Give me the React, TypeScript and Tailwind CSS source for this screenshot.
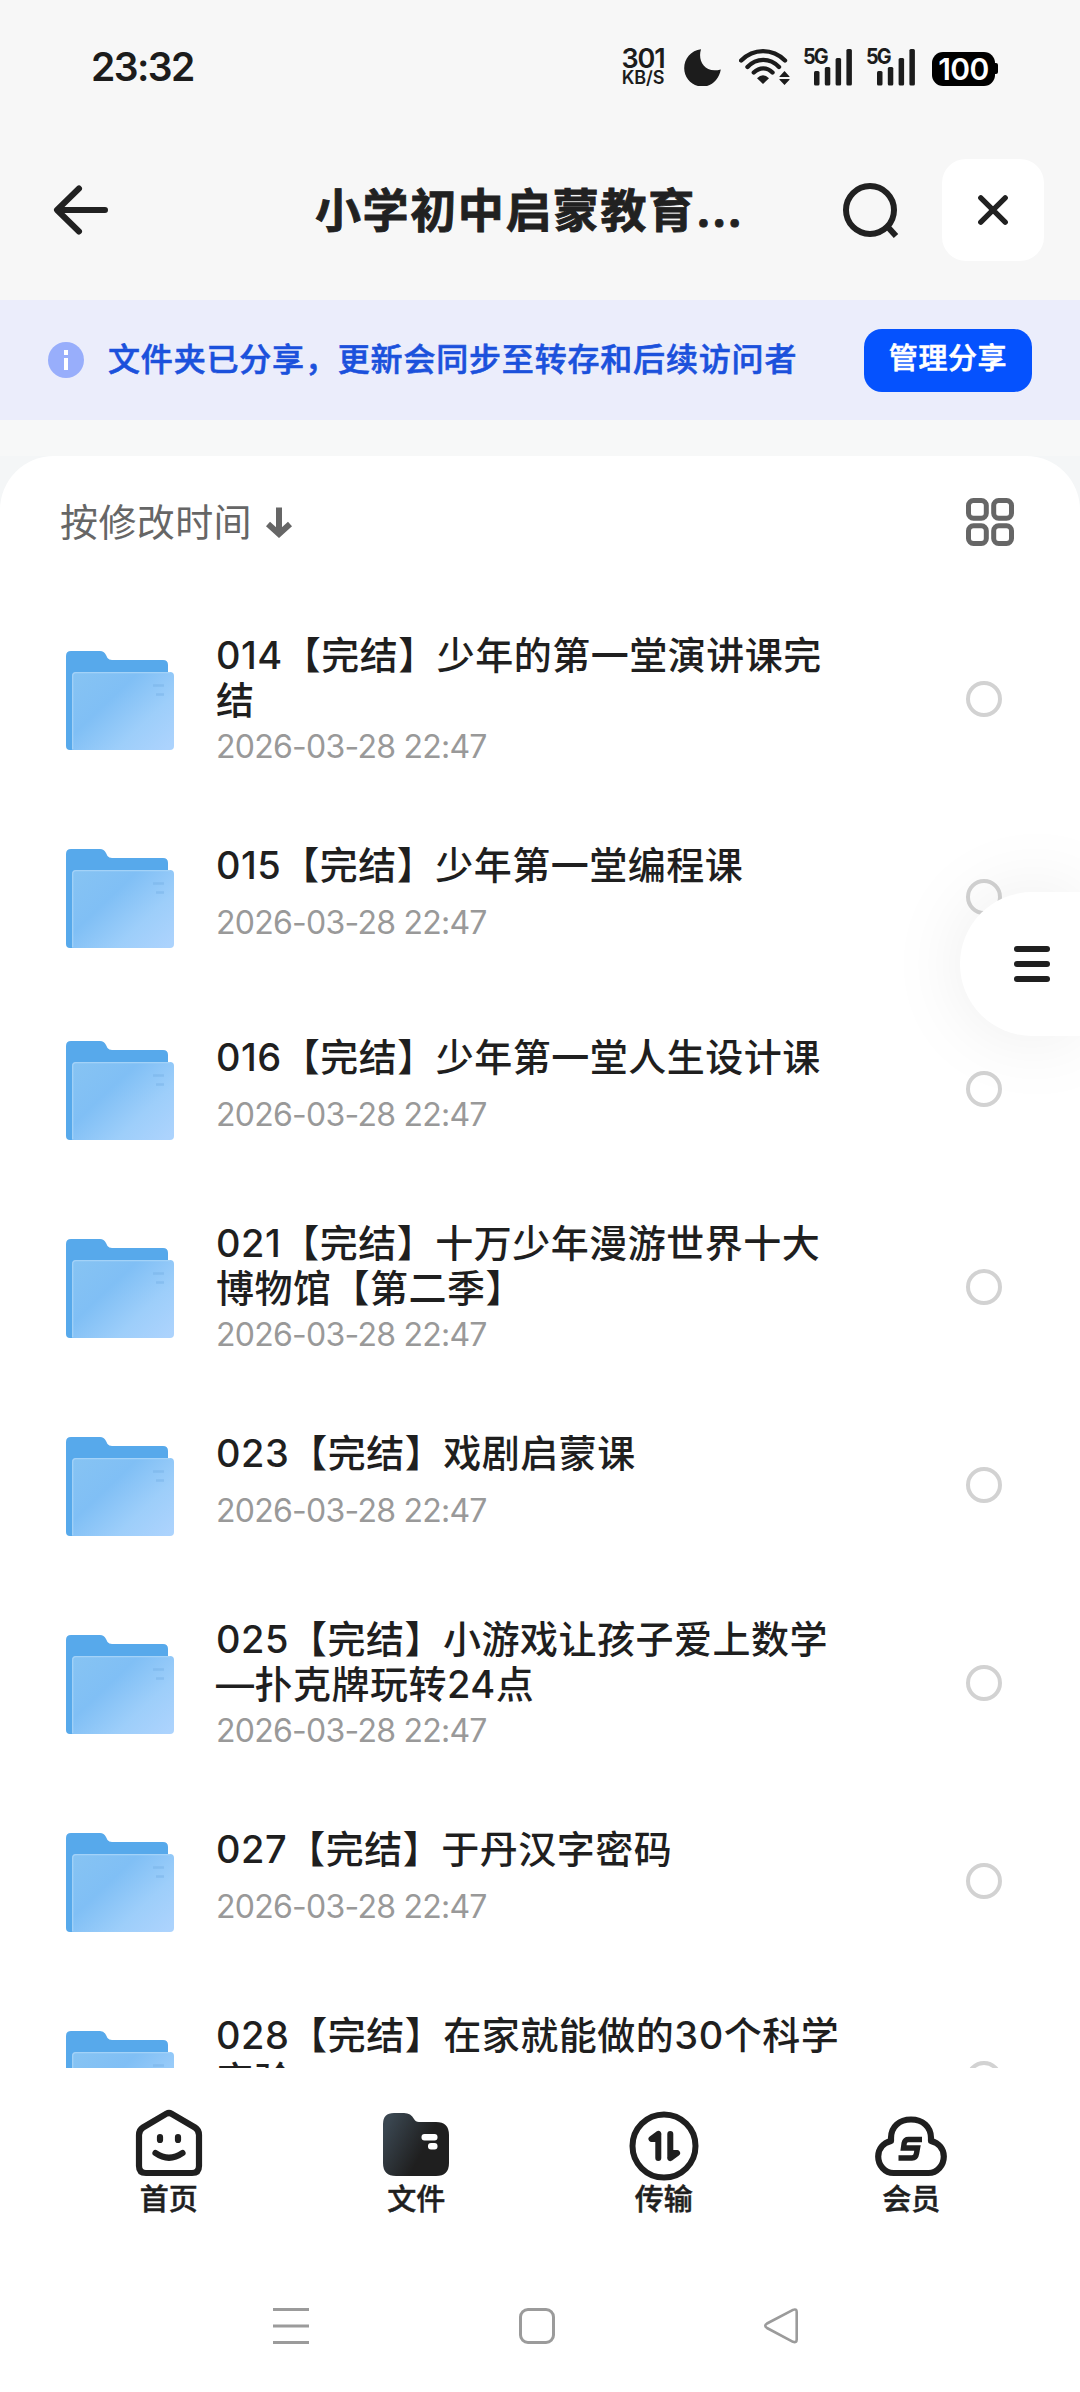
import React from 'react';

type FileItem = {
  name: string;
  date: string;
};

const files: FileItem[] = [
  { name: '014【完结】少年的第一堂演讲课完结', date: '2026-03-28 22:47' },
  { name: '015【完结】少年第一堂编程课', date: '2026-03-28 22:47' },
  { name: '016【完结】少年第一堂人生设计课', date: '2026-03-28 22:47' },
  { name: '021【完结】十万少年漫游世界十大博物馆【第二季】', date: '2026-03-28 22:47' },
  { name: '023【完结】戏剧启蒙课', date: '2026-03-28 22:47' },
  { name: '025【完结】小游戏让孩子爱上数学—扑克牌玩转24点', date: '2026-03-28 22:47' },
  { name: '027【完结】于丹汉字密码', date: '2026-03-28 22:47' },
  { name: '028【完结】在家就能做的30个科学实验', date: '2026-03-28 22:47' },
];

const Signal = () => (
  <div className="relative w-[49px] h-[38px]">
    <span className="absolute left-0 top-0 text-[22px] leading-[17px] font-bold tracking-[-2px] origin-left scale-x-90">5G</span>
    <svg className="absolute right-0 top-0" width="38" height="38" viewBox="0 0 38 38" fill="#1c1c1c">
      <rect x="0" y="23" width="5.5" height="14.5" rx="1.5" />
      <rect x="10.8" y="19" width="5.5" height="18.5" rx="1.5" />
      <rect x="21.6" y="10" width="5.5" height="27.5" rx="1.5" />
      <rect x="32.4" y="1" width="5.5" height="36.5" rx="1.5" />
    </svg>
  </div>
);

const StatusBar = () => (
  <div className="flex h-[134px] justify-between pl-[91px] pr-[82px] text-[#1c1c1c]">
    <div className="mt-[42px] text-[39px] leading-[50px] font-semibold tracking-[-1.6px]">23:32</div>
    <div className="mt-[48px] flex h-[38px]">
      <div className="flex w-[44px] flex-col items-center whitespace-nowrap">
        <span className="text-[27px] leading-[21px] font-semibold tracking-[-1.2px]">301</span>
        <span className="text-[18px] leading-[18px] font-semibold tracking-[-0.1px]">KB/S</span>
      </div>
      <svg className="ml-[19px]" width="37" height="38" viewBox="0 0 37 38" fill="#1c1c1c">
        <path d="M17 1.2C13.5 12 20 26 36.8 21.5C35 31 28 38.6 18.6 38.6C8.4 38.6 0.2 30.3 0.2 20.2C0.2 10.3 7.2 2.4 17 1.2Z" />
      </svg>
      <svg className="ml-[18px]" width="51" height="38" viewBox="0 0 51 38" fill="none" stroke="#1c1c1c" strokeWidth="4.4" strokeLinecap="round">
        <path d="M2.2 12.5C14.5 0 33.5 0 46 12.5" />
        <path d="M8.5 19C17.5 9.5 31 9.5 40 19" />
        <path d="M14.8 24.5C20.5 19 28 19 33.5 24.5" />
        <path d="M24 36L18 30.2Q24 24.5 30 30.2Z" fill="#1c1c1c" stroke="none" />
        <path d="M45.5 23L50.5 28.5V29H40.5V28.5ZM45.5 37L50.5 31.8V31H40.5V31.8Z" fill="#1c1c1c" stroke="none" />
      </svg>
      <div className="ml-[13px]"><Signal /></div>
      <div className="ml-[14px]"><Signal /></div>
      <div className="mt-[3px] ml-[17px] flex items-center">
        <div className="flex h-[34px] w-[63px] items-center justify-center rounded-[11px] bg-black text-[30px] leading-[34px] font-semibold tracking-[-0.6px] text-white">100</div>
        <div className="h-[11px] w-[3px] rounded-r-[2px] bg-black" />
      </div>
    </div>
  </div>
);

const Header = () => (
  <div className="flex h-[166px] items-center pb-[14px]">
    <svg className="ml-[52px]" width="60" height="60" viewBox="0 0 60 60" fill="none" stroke="#212121" strokeWidth="6" strokeLinecap="round" strokeLinejoin="round">
      <path d="M27 8.5L5 30L27 51.5M6 30H53" />
    </svg>
    <h1 className="ml-[203px] w-[430px] text-[46px] leading-[60px] font-bold tracking-[1.6px] whitespace-nowrap text-[#212121] [-webkit-text-stroke:0.8px]">
      小学初中启蒙教育<span className="tracking-[0.2px]">...</span>
    </h1>
    <svg className="ml-[96px]" width="62" height="62" viewBox="0 0 62 62" fill="none" stroke="#212121" strokeWidth="6">
      <circle cx="29" cy="31" r="24" />
      <path d="M45 46L55 57" strokeWidth="6" />
    </svg>
    <button className="ml-[39px] flex h-[102px] w-[102px] items-center justify-center rounded-[24px] bg-white">
      <svg width="32" height="32" viewBox="0 0 32 32" fill="none" stroke="#212121" strokeWidth="5.4" strokeLinecap="round">
        <path d="M3.8 3.8L28.2 28.2M28.2 3.8L3.8 28.2" />
      </svg>
    </button>
  </div>
);

const ShareBanner = () => (
  <div className="flex h-[120px] items-center bg-[#ebedfb] pr-[48px] pl-[48px]">
    <svg width="36" height="36" viewBox="0 0 36 36">
      <circle cx="18" cy="18" r="18" fill="#98aefb" />
      <rect x="16" y="8" width="4" height="5" fill="#fff" />
      <rect x="16" y="16" width="4" height="12" fill="#fff" />
    </svg>
    <span className="ml-[24px] text-[32px] leading-[40px] font-medium tracking-[0.82px] whitespace-nowrap text-[#1b51dc] [-webkit-text-stroke:0.6px]">文件夹已分享，更新会同步至转存和后续访问者</span>
    <button className="ml-auto flex h-[63px] w-[168px] justify-center rounded-[18px] bg-[#0552fe] pt-[10px] text-[29px] leading-[40px] font-medium tracking-[0.6px] text-white [-webkit-text-stroke:0.6px]">管理分享</button>
  </div>
);

const Folder = () => (
  <svg className="shrink-0" width="108" height="99" viewBox="0 0 108 99">
    <defs>
      <linearGradient id="front" x1="0" y1="0.1" x2="1" y2="0.9">
        <stop offset="0" stopColor="#86c3f3" />
        <stop offset="0.35" stopColor="#80bff5" />
        <stop offset="0.7" stopColor="#9dcefa" />
        <stop offset="1" stopColor="#acd3fd" />
      </linearGradient>
    </defs>
    <path d="M0 5Q0 0 5 0H34Q38 0 40 4L41.500 7Q43 9 46 9H97Q102 9 102 14V90H6V99H4Q0 99 0 95Z" fill="#57a9eb" />
    <path d="M6 25Q6 21 10 21H104Q108 21 108 25V95Q108 99 104 99H6Z" fill="url(#front)" />
    <path d="M6.700 98V25Q6.700 21.700 10 21.700H104" fill="none" stroke="#a3d2f8" strokeWidth="1.200" />
    <path d="M87 34.500H98M90 43.500H98" stroke="#78b3e8" strokeWidth="2.500" opacity="0.5" />
  </svg>
);

const FileRow = ({ file, twoLines }: { file: FileItem; twoLines: boolean }) => (
  <div className={twoLines ? 'flex h-[204px] shrink-0 items-center pl-[66px]' : 'flex h-[192px] shrink-0 items-center pl-[66px]'}>
    <Folder />
    <div className={twoLines ? 'ml-[42px] w-[640px] pt-[3px]' : 'ml-[42px] w-[640px] pb-[7px]'}>
      <p className="text-[38px] leading-[45px] font-medium tracking-[0.5px] break-all text-[#1f1f1f]">{file.name}</p>
      <p className={twoLines ? 'text-[32px] leading-[48px] tracking-[-0.75px] text-[#999]' : 'mt-[12px] text-[32px] leading-[46px] tracking-[-0.75px] text-[#999]'}>{file.date}</p>
    </div>
    <div className="mr-[78px] mb-[2px] ml-auto h-[36px] w-[36px] rounded-full border-[4px] border-[#d2d2d2]" />
  </div>
);

const SortBar = () => (
  <div className="flex h-[132px] shrink-0 items-center pr-[66px] pl-[60px] text-[#666]">
    <span className="text-[38px] leading-[48px] tracking-[0.4px]">按修改时间</span>
    <svg className="mt-[1px] ml-[13px]" width="28" height="32" viewBox="0 0 28 32" fill="none" stroke="#666" strokeWidth="6">
      <path d="M14 0.500V26M3 17L14 27L25 17" />
    </svg>
    <svg className="ml-auto" width="48" height="48" viewBox="0 0 48 48" fill="none" stroke="#666" strokeWidth="5">
      <rect x="2.500" y="2.500" width="17.800" height="17.800" rx="5" />
      <rect x="27.700" y="2.500" width="17.800" height="17.800" rx="5" />
      <rect x="2.500" y="27.700" width="17.800" height="17.800" rx="5" />
      <rect x="27.700" y="27.700" width="17.800" height="17.800" rx="5" />
    </svg>
  </div>
);

const HomeIcon = () => (
  <svg width="72" height="72" viewBox="0 0 72 72" fill="none" stroke="#1f1f1f" strokeWidth="6.200" strokeLinecap="round" strokeLinejoin="round">
    <path d="M33.500 6.700Q36 5.300 38.500 6.700L62 20.500Q66 23 66 28V59Q66 66 59 66H13Q6 66 6 59V28Q6 23 10 20.500Z" />
    <path d="M22.500 46Q36 55.500 49.500 46" />
    <path d="M27 30V33M45 30V33" />
  </svg>
);

const FilesIcon = () => (
  <svg width="72" height="72" viewBox="0 0 72 72">
    <defs>
      <linearGradient id="tab" x1="0" y1="0.3" x2="0.6" y2="0.6">
        <stop offset="0" stopColor="#3a4650" />
        <stop offset="1" stopColor="#1f1f1f" />
      </linearGradient>
    </defs>
    <path d="M3 17Q3 6 14 6H24Q31 6 34 12Q35.500 15 39 15H56Q69 15 69 28V56Q69 69 56 69H16Q3 69 3 56Z" fill="url(#tab)" />
    <rect x="41.500" y="27" width="16" height="6.500" rx="3" fill="#fff" />
    <rect x="48" y="36" width="9.500" height="6.500" rx="3" fill="#fff" />
  </svg>
);

const TransferIcon = () => (
  <svg className="overflow-visible" width="72" height="72" viewBox="0 0 72 72" fill="none" stroke="#1f1f1f" strokeWidth="6" strokeLinecap="round" strokeLinejoin="round">
    <circle cx="36" cy="39" r="31.500" />
    <path d="M30.300 27V51M30.300 27L23.500 32H30" />
    <path d="M42.300 27V51M42.300 51L49.100 46H42.500" />
  </svg>
);

const VipIcon = () => (
  <svg width="72" height="72" viewBox="0 0 72 72" fill="none" stroke="#1f1f1f" strokeLinejoin="round">
    <path strokeWidth="6.200" d="M16 34V31C16 19.500 24.500 12.500 36 12.500S56 19.500 56 31V34C64 36 68.800 42 68.800 49.500C68.800 58.500 62 66 53.500 66H18.500C10 66 3.200 58.500 3.200 49.500C3.200 42 8 36 16 34Z" />
    <path strokeWidth="5.400" strokeLinejoin="miter" d="M47 32.500H33.500Q30 32.500 29.200 36L28.500 41H42.500L41.500 46.500Q40.800 51 37 51H23.500" />
  </svg>
);

const tabs = [
  { label: '首页', icon: <HomeIcon /> },
  { label: '文件', icon: <FilesIcon /> },
  { label: '传输', icon: <TransferIcon /> },
  { label: '会员', icon: <VipIcon /> },
];

const TabBar = () => (
  <div className="flex h-[200px] px-[45px] pt-[39px]">
    {tabs.map((tab) => (
      <div key={tab.label} className="flex flex-1 flex-col items-center">
        {tab.icon}
        <span className="mt-[2px] text-[29px] leading-[38px] font-medium text-[#1f1f1f] [-webkit-text-stroke:0.5px]">{tab.label}</span>
      </div>
    ))}
  </div>
);

const SystemNav = () => (
  <div className="flex h-[124px] justify-between pt-[40px] pr-[281px] pl-[273px]">
    <svg width="36" height="36" viewBox="0 0 36 36" stroke="#9b9b9b" strokeWidth="3">
      <path d="M0 1.500H36M0 18H36M0 34.500H36" />
    </svg>
    <div className="ml-[2px] h-[36px] w-[36px] rounded-[9px] border-[3px] border-[#9b9b9b]" />
    <svg width="36" height="36" viewBox="0 0 36 36" fill="none" stroke="#9b9b9b" strokeWidth="2.600" strokeLinejoin="round">
      <path d="M30 1.900Q33.700 0.500 33.700 4V31.500Q33.700 35 30 33.800L4 20Q0.500 17.800 4 15.500Z" />
    </svg>
  </div>
);

export default function App() {
  return (
    <div className="relative flex h-[2392px] w-[1080px] flex-col overflow-hidden bg-white font-['Inter','Noto_Sans_CJK_SC',sans-serif]">
      <div className="bg-[#f7f7f7]">
        <StatusBar />
        <Header />
      </div>
      <ShareBanner />
      <div className="h-[36px] bg-[#f7f8f8]" />
      <div className="h-[1612px] bg-[#f4f6f7]">
        <div className="flex h-full flex-col overflow-hidden rounded-t-[54px] bg-white">
          <SortBar />
          <div className="flex flex-col pt-[10px]">
            {files.map((file) => (
              <FileRow key={file.name} file={file} twoLines={file.name.length > 17} />
            ))}
          </div>
        </div>
      </div>
      <TabBar />
      <SystemNav />

      {/* floating menu handle */}
      <button className="absolute top-[892px] right-0 flex h-[144px] w-[120px] flex-col justify-center gap-[9px] rounded-l-[72px] bg-white pl-[54px] shadow-[0_0_80px_rgba(0,0,0,0.08)]">
        <span className="h-[6px] w-[36px] rounded-full bg-[#1f1f1f]" />
        <span className="h-[6px] w-[36px] rounded-full bg-[#1f1f1f]" />
        <span className="h-[6px] w-[36px] rounded-full bg-[#1f1f1f]" />
      </button>
    </div>
  );
}
